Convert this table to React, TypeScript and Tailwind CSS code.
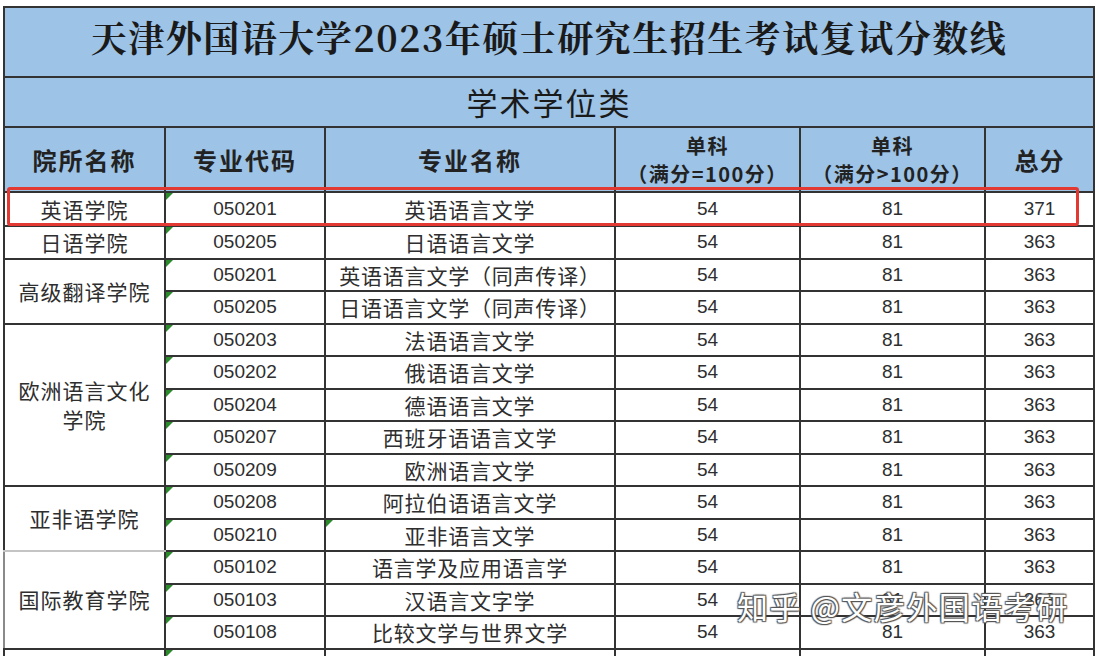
import type { ReactNode } from "react";

type Row = {
  code: string;
  major: string;
  single: string;
  singleOver: string;
  total: string;
  majorMark?: boolean;
};

type Group = {
  college: ReactNode;
  rows: Row[];
  bottomLight?: boolean;
  leftLight?: boolean;
};

const groups: Group[] = [
  { college: "英语学院", rows: [{ code: "050201", major: "英语语言文学", single: "54", singleOver: "81", total: "371" }] },
  { college: "日语学院", rows: [{ code: "050205", major: "日语语言文学", single: "54", singleOver: "81", total: "363" }] },
  {
    college: "高级翻译学院",
    rows: [
      { code: "050201", major: "英语语言文学（同声传译）", single: "54", singleOver: "81", total: "363" },
      { code: "050205", major: "日语语言文学（同声传译）", single: "54", singleOver: "81", total: "363" },
    ],
  },
  {
    college: (
      <>
        欧洲语言文化
        <br />
        学院
      </>
    ),
    rows: [
      { code: "050203", major: "法语语言文学", single: "54", singleOver: "81", total: "363" },
      { code: "050202", major: "俄语语言文学", single: "54", singleOver: "81", total: "363" },
      { code: "050204", major: "德语语言文学", single: "54", singleOver: "81", total: "363" },
      { code: "050207", major: "西班牙语语言文学", single: "54", singleOver: "81", total: "363" },
      { code: "050209", major: "欧洲语言文学", single: "54", singleOver: "81", total: "363" },
    ],
  },
  {
    college: "亚非语学院",
    bottomLight: true,
    rows: [
      { code: "050208", major: "阿拉伯语语言文学", single: "54", singleOver: "81", total: "363" },
      { code: "050210", major: "亚非语言文学", single: "54", singleOver: "81", total: "363", majorMark: true },
    ],
  },
  {
    college: "国际教育学院",
    leftLight: true,
    rows: [
      { code: "050102", major: "语言学及应用语言学", single: "54", singleOver: "81", total: "363" },
      { code: "050103", major: "汉语言文字学", single: "54", singleOver: "81", total: "363" },
      { code: "050108", major: "比较文学与世界文学", single: "54", singleOver: "81", total: "363" },
    ],
  },
];

const cjk = "font-['Noto_Sans_CJK_SC',sans-serif]";
const num = "font-['Liberation_Sans','Noto_Sans_CJK_SC',sans-serif]";
const cell = "border-2 border-[#333] p-0 text-center align-middle";

function Mark() {
  return (
    <span className="absolute left-0 top-0 h-0 w-0 border-r-[7px] border-t-[7px] border-r-transparent border-t-[#2b8a2b]" />
  );
}

export default function App() {
  let rowIndex = 0;
  return (
    <div className="relative h-[656px] w-[1099px] overflow-hidden bg-white text-[#2e2e2e]">
      <div className="pl-[3px] pt-[6px]">
        <table className="w-[1090px] table-fixed border-collapse">
          <colgroup>
            <col className="w-[161px]" />
            <col className="w-[160px]" />
            <col className="w-[290px]" />
            <col className="w-[185px]" />
            <col className="w-[185px]" />
            <col className="w-[109px]" />
          </colgroup>
          <tbody>
            <tr className="h-[70px] bg-[#9dc3e6]">
              <td colSpan={6} className={`${cell} pb-[10px]`}>
                <span className="font-['Noto_Serif_CJK_SC','Liberation_Serif','Noto_Sans_CJK_SC',serif] text-[36px] font-bold tracking-[1.5px] text-[#1a1a1a]">
                  天津外国语大学2023年硕士研究生招生考试复试分数线
                </span>
              </td>
            </tr>
            <tr className="h-[50px] bg-[#9dc3e6]">
              <td colSpan={6} className={`${cell} ${cjk} text-[31px] font-normal tracking-[2px] text-[#1a1a1a]`}>
                学术学位类
              </td>
            </tr>
            <tr className={`h-[65px] bg-[#9dc3e6] ${cjk} font-bold text-[#222]`}>
              <td className={`${cell} text-[24px] tracking-[2px]`}>院所名称</td>
              <td className={`${cell} text-[24px] tracking-[2px]`}>专业代码</td>
              <td className={`${cell} text-[24px] tracking-[2px]`}>专业名称</td>
              <td className={`${cell} text-[20px] leading-[28px] tracking-[1.5px]`}>
                单科
                <br />
                （满分=100分）
              </td>
              <td className={`${cell} text-[20px] leading-[28px] tracking-[1.5px]`}>
                单科
                <br />
                （满分&gt;100分）
              </td>
              <td className={`${cell} text-[24px] tracking-[1px]`}>总分</td>
            </tr>
            {groups.map((group) =>
              group.rows.map((row, i) => {
                const first = rowIndex === 0;
                rowIndex += 1;
                return (
                  <tr key={`${row.code}-${rowIndex}`} className={`${first ? "h-[34px]" : "h-[32.5px]"} leading-[24px]`}>
                    {i === 0 && (
                      <td
                        rowSpan={group.rows.length}
                        className={`${cell} ${cjk} text-[21px] leading-[29px] tracking-[1px] ${
                          group.bottomLight ? "border-b-[#c4c4c4]" : ""
                        } ${group.leftLight ? "border-l-[#8a8a8a]" : ""}`}
                      >
                        {group.college}
                      </td>
                    )}
                    <td className={`${cell} ${num} relative text-[19px]`}>
                      <Mark />
                      {row.code}
                    </td>
                    <td className={`${cell} ${cjk} relative text-[21px] tracking-[0.8px]`}>
                      {row.majorMark && <Mark />}
                      {row.major}
                    </td>
                    <td className={`${cell} ${num} text-[19px]`}>{row.single}</td>
                    <td className={`${cell} ${num} text-[19px]`}>{row.singleOver}</td>
                    <td className={`${cell} ${num} text-[19px]`}>{row.total}</td>
                  </tr>
                );
              }),
            )}
            <tr className="h-[32.5px] leading-[24px]">
              <td className={cell} />
              <td className={`${cell} relative`}>
                <Mark />
              </td>
              <td className={cell} />
              <td className={cell} />
              <td className={cell} />
              <td className={cell} />
            </tr>
          </tbody>
        </table>
      </div>

      {/* highlighted row */}
      <div className="absolute left-[7px] top-[187px] h-[39px] w-[1072px] rounded-[3px] border-[3px] border-[#e23a33]" />

      {/* watermark */}
      <div
        className={`absolute left-[737px] top-[588px] ${cjk} text-[31px] leading-[36px] tracking-[1.5px] text-white [text-shadow:1px_1px_1px_#555,-1px_-1px_1px_#555,1px_-1px_1px_#555,-1px_1px_1px_#555]`}
      >
        知乎 @文彦外国语考研
      </div>
    </div>
  );
}
